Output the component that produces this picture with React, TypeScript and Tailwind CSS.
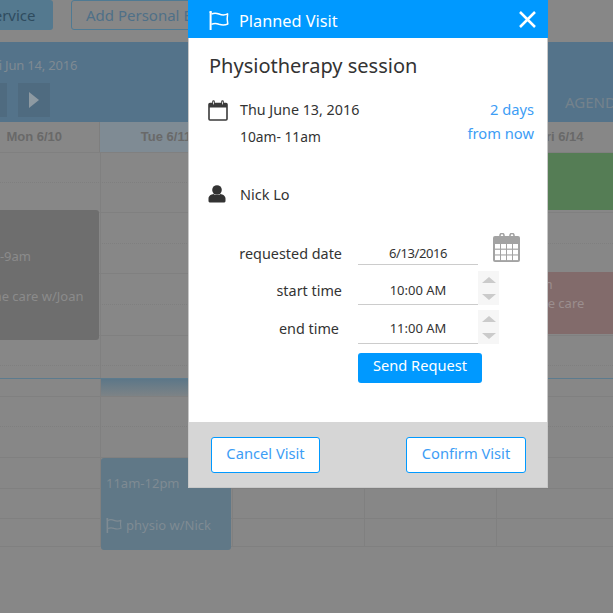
const font = { fontFamily: '"Noto Sans", "Open Sans", sans-serif' };

function FlagIcon({ className, color }: { className?: string; color: string }) {
  return (
    <svg className={className} viewBox="0 0 20 19" fill="none" stroke={color} strokeWidth="1.5">
      <path d="M1.6 0.8V18.4" strokeWidth="2" strokeLinecap="round" />
      <circle cx="1.6" cy="1.2" r="1.1" fill={color} stroke="none" />
      <path d="M2.4 3.2C5 1.6 7.6 2 10 3C12.6 4.1 15.8 4.4 18.6 2.9C18 6.2 18 9.6 18.8 13C15.8 14.3 12.8 14.2 10 13.2C7.4 12.2 5 12 2.4 13.4" strokeLinejoin="round" />
    </svg>
  );
}

function Spinner() {
  return (
    <div className="flex h-[34px] w-[21px] flex-col items-center bg-[#f6f6f6]">
      <div className="flex flex-1 items-center justify-center">
        <div className="h-0 w-0 border-x-[7px] border-b-[6px] border-x-transparent border-b-[#cbcbcb]" />
      </div>
      <div className="flex flex-1 items-center justify-center">
        <div className="h-0 w-0 border-x-[7px] border-t-[6px] border-x-transparent border-t-[#cbcbcb]" />
      </div>
    </div>
  );
}

function Background() {
  const solid = [212, 273, 335, 396, 457, 488, 518, 546];
  const dotted = [182, 243, 304, 365, 426];
  return (
    <div className="absolute inset-0 overflow-hidden bg-[#878787]">
      <div className="flex h-[42px] items-start">
        <div className="ml-[-40px] flex h-[30px] w-[93px] items-center justify-center rounded-[3px] bg-[#54798f] text-[15px] text-[#2f4c5f]">
          <span className="pl-[8px]">Service</span>
        </div>
        <div className="ml-[18px] flex h-[30px] w-[200px] items-center rounded-[3px] border border-[#4f7a93] pl-[14px] text-[15px] text-[#4f7088]">
          <span className="whitespace-nowrap">Add Personal Event</span>
        </div>
      </div>
      <div className="relative h-[80px] bg-[#54738a] text-[#7f8a92]">
        <div className="absolute left-[-13px] top-[14px] whitespace-nowrap text-[13px] tracking-[-0.2px]">Fri Jun 14, 2016</div>
        <div className="absolute left-[18px] top-[41px] flex h-[34px] w-[32px] items-center justify-center bg-[#4f6b80]">
          <div className="h-0 w-0 border-y-[8px] border-l-[10px] border-y-transparent border-l-[#8e9aa2]" />
        </div>
        <div className="absolute left-[-14px] top-[41px] h-[34px] w-[21px] bg-[#4f6b80]" />
        <div className="absolute left-[565px] top-[49px] text-[15px] text-[#74828c]">AGENDA</div>
      </div>
      <div className="flex h-[31px] border-b border-[#808080] text-[13px] font-bold text-[#696969]" style={{ fontFamily: '"Liberation Sans", sans-serif' }}>
        <div className="flex w-[100px] items-center justify-end border-r border-[#7e7e7e] pr-[37px]">Mon 6/10</div>
        <div className="flex w-[132px] items-center justify-center bg-[#7f8b94]">Tue 6/11</div>
        <div className="w-[316px]" />
        <div className="flex flex-1 items-center"><span className="ml-[-10px]">Fri 6/14</span></div>
      </div>
      <div className="relative h-[393px]">
        <div className="absolute left-[100px] top-0 h-full w-px bg-[#808080]" />
        <div className="absolute left-[232px] top-0 h-full w-px bg-[#808080]" />
        <div className="absolute left-[364px] top-0 h-full w-px bg-[#808080]" />
        <div className="absolute left-[496px] top-0 h-full w-px bg-[#808080]" />
        {solid.map((y) => (
          <div key={y} style={{ top: y - 153 }} className="absolute left-0 right-0 h-px bg-[#808080]" />
        ))}
        {dotted.map((y) => (
          <div key={y} style={{ top: y - 153 }} className="absolute left-0 right-0 h-0 border-t border-dotted border-[#7f7f7f]" />
        ))}
        <div className="absolute left-[101px] top-[225px] h-[18px] w-[131px] bg-gradient-to-b from-[#5a7688] to-[#7d8386]" />
        <div className="absolute left-0 right-0 top-[225px] h-px bg-[#5c7b8e]" />
        <div className="absolute left-[-20px] top-[57px] h-[130px] w-[119px] rounded-[3px] bg-[#6e6e6e] text-[13px] text-[#8b8b8b]">
          <div className="absolute left-[-7px] top-[37px] whitespace-nowrap">8am-9am</div>
          <div className="absolute left-[-8px] top-[77px] whitespace-nowrap">Home care w/Joan</div>
        </div>
        <div className="absolute left-[530px] top-0 h-[57px] w-[90px] bg-[#557d55]">
          <div className="absolute left-[-16px] top-[30px] whitespace-nowrap text-[13px] text-[#7f9a7f]">9am</div>
        </div>
        <div className="absolute left-[530px] top-[119px] h-[62px] w-[90px] bg-[#826b6b] text-[13px] text-[#9b8e8e]">
          <div className="absolute left-[-5px] top-[3px]">1pm</div>
          <div className="absolute left-[-12px] top-[22px] whitespace-nowrap">Home care</div>
        </div>
        <div className="absolute left-[365px] top-[300px] h-[35px] w-[130px] rounded-b-[3px] bg-[#607887]" />
        <div className="absolute left-[101px] top-[305px] h-[92px] w-[130px] rounded-[3px] bg-[#607887] text-[13px] text-[#7f8b93]">
          <div className="absolute left-[5px] top-[16px]">11am-12pm</div>
          <div className="absolute left-[5px] top-[58px] flex items-center gap-[4px] whitespace-nowrap">
            <FlagIcon className="h-[15px] w-[16px]" color="#7f8b93" />
            <span>physio w/Nick</span>
          </div>
        </div>
      </div>
    </div>
  );
}

export default function App() {
  return (
    <div className="relative h-[613px] w-[613px] overflow-hidden text-[#333333]" style={font}>
      <Background />
      <div className="absolute left-[188px] top-0 flex h-[488px] w-[360px] flex-col border-x border-b border-[#c8c8c8] bg-white">
        <div className="mx-[-1px] flex h-[38px] shrink-0 items-center justify-between bg-[#0099ff] pl-[21px] pr-[12px] pt-[5px] text-white">
          <div className="flex items-center gap-[10px]">
            <FlagIcon className="mb-[2px] h-[19px] w-[20px]" color="#ffffff" />
            <span className="text-[16.3px]">Planned Visit</span>
          </div>
          <svg className="mb-[4px] h-[17px] w-[17px]" viewBox="0 0 17 17" stroke="#fff" strokeWidth="2.5" fill="none">
            <path d="M1 1L16 16M16 1L1 16" />
          </svg>
        </div>
        <div className="flex flex-1 flex-col">
          <div className="ml-[20px] mt-[12px] h-[31px] text-[20px] leading-[31px]">Physiotherapy session</div>
          <div className="mt-[17px] flex h-[54px] pl-[19px] pr-[13px]">
            <svg className="mt-[2px] h-[21px] w-[20px]" viewBox="0 0 20 21" fill="none">
              <rect x="1" y="3.5" width="18" height="16.5" rx="1" stroke="#3a3a3a" strokeWidth="1.6" />
              <rect x="1" y="3" width="18" height="4.5" fill="#3a3a3a" />
              <path d="M5.5 1.5V5M14.5 1.5V5" stroke="#3a3a3a" strokeWidth="2.6" strokeLinecap="round" />
              <path d="M5.5 2V4M14.5 2V4" stroke="#ffffff" strokeWidth="0.8" strokeLinecap="round" />
            </svg>
            <div className="ml-[12px] flex-1 pt-[1px] text-[14.3px]">
              <div className="h-[27px] leading-[22px]">Thu June 13, 2016</div>
              <div className="text-[13.8px] leading-[22px]">10am- 11am</div>
            </div>
            <div className="mt-[-1px] text-right text-[14.7px] leading-[24px] text-[#3d9df5]">
              <div>2 days</div>
              <div>from now</div>
            </div>
          </div>
          <div className="mt-[32px] flex h-[22px] items-center pl-[19px]">
            <svg className="mb-[3px] h-[18px] w-[18px]" viewBox="0 0 18 18">
              <circle cx="9" cy="5" r="4.8" fill="#333" />
              <path d="M0.5 16V13.5C0.5 10.6 3.4 9.4 5.5 9C7 10.4 11 10.4 12.5 9C14.6 9.4 17.5 10.6 17.5 13.5V16C17.5 17 16.5 17.5 15.5 17.5H2.5C1.5 17.5 0.5 17 0.5 16Z" fill="#333" />
            </svg>
            <div className="ml-[14px] text-[14.5px]">Nick Lo</div>
          </div>

          <div className="mt-[31px] flex h-[28px] items-start">
            <div className="w-[153px] pt-[6px] text-right text-[14.4px] leading-[22px]">requested date</div>
            <div className="ml-[16px] flex h-[28px] w-[120px] items-center justify-center border-b border-[#cccccc] pt-[6px] text-[13px] tracking-[-0.4px]">6/13/2016</div>
            <svg className="ml-[15px] mt-[-4px] h-[29px] w-[27px]" viewBox="0 0 27 29" fill="none">
              <rect x="0" y="3" width="27" height="26" rx="2" fill="#a3a3a3" />
              <path d="M7 4V2.5A2 2 0 0 1 11 2.5V4M17 4V2.5A2 2 0 0 1 21 2.5V4" stroke="#a3a3a3" strokeWidth="1.6" />
              <g fill="#ffffff">
                {[11, 16.8, 22.5].flatMap((y) => [2, 8, 14, 20].map((x) => <rect key={x + '-' + y} x={x} y={y} width="5" height="4.6" />))}
              </g>
            </svg>
          </div>
          <div className="mt-[6px] flex items-end">
            <div className="w-[153px] pb-[3px] text-right text-[14.4px] leading-[22px]">start time</div>
            <div className="ml-[16px] flex h-[34px] w-[120px] items-center justify-center border-b border-[#cccccc] pt-[6px] text-[13px]">10:00 AM</div>
            <Spinner />
          </div>
          <div className="mt-[5px] flex items-end">
            <div className="w-[150px] pb-[4px] text-right text-[14.4px] leading-[22px]">end time</div>
            <div className="ml-[19px] flex h-[34px] w-[120px] items-center justify-center border-b border-[#cccccc] pt-[5px] text-[13px]">11:00 AM</div>
            <Spinner />
          </div>
          <button className="ml-[169px] mt-[9px] h-[30px] w-[124px] rounded-[3px] bg-[#0099ff] pb-[4px] text-[14.6px] text-white">Send Request</button>
        </div>
        <div className="flex h-[65px] shrink-0 items-start justify-between bg-[#d6d6d6] pl-[22px] pr-[21px] pt-[15px]">
          <button className="h-[36px] w-[109px] rounded-[3px] border border-[#0099ff] bg-white pb-[3px] text-[14.7px] text-[#3d9df5]">Cancel Visit</button>
          <button className="h-[36px] w-[120px] rounded-[3px] border border-[#0099ff] bg-white pb-[3px] text-[14.7px] text-[#3d9df5]">Confirm Visit</button>
        </div>
      </div>
    </div>
  );
}
